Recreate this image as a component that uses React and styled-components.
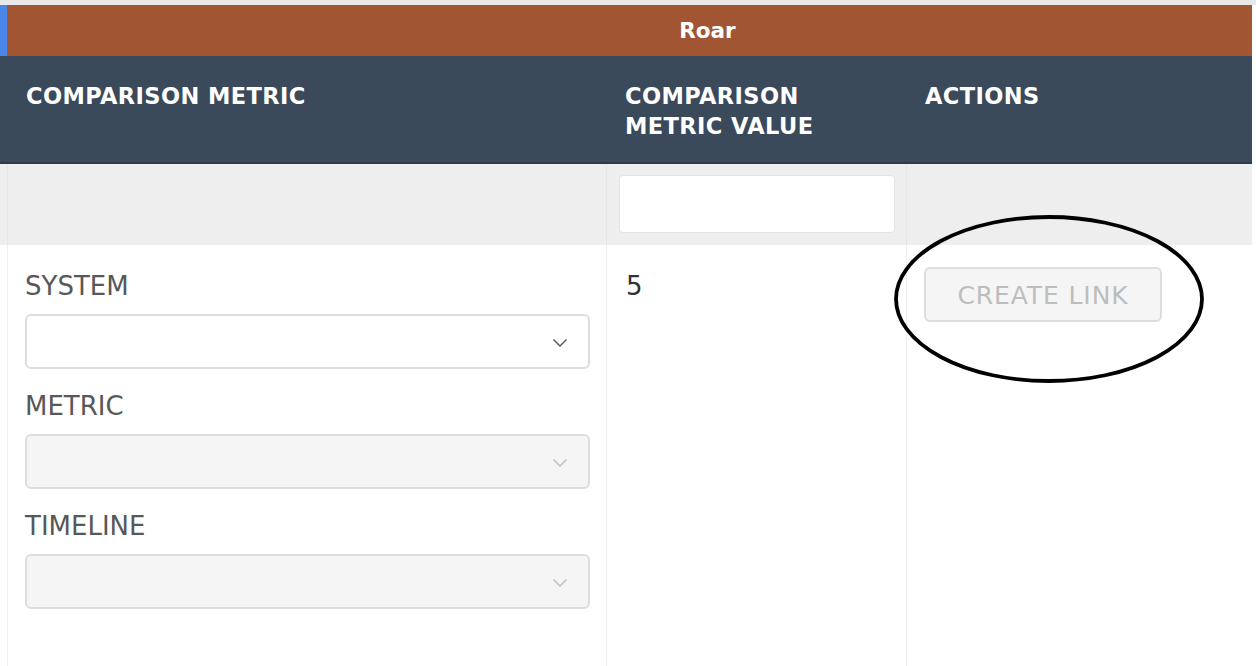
import styled, { createGlobalStyle } from "styled-components";

const GlobalStyle = createGlobalStyle`
  html, body {
    margin: 0;
    padding: 0;
    background: #ffffff;
  }
  body {
    font-family: "DejaVu Sans", "Noto Sans", Arial, sans-serif;
    overflow: hidden;
  }
`;

const colors = {
  accent: "#4a86e8",
  group: "#a15532",
  header: "#3a4a5b",
  headerEdge: "#2e3b49",
  filter: "#eeeeee",
  line: "#f0f0f0",
  label: "#585858",
};

const Chevron = ({ disabled }) => (
  <svg width="16" height="10" viewBox="0 0 16 10" fill="none">
    <path
      d="M1.5 1.5 L8 8 L14.5 1.5"
      stroke={disabled ? "#bdbdbd" : "#555"}
      strokeWidth="1.4"
    />
  </svg>
);

const Select = ({ disabled }) => (
  <SelectBox disabled={disabled}>
    <Chevron disabled={disabled} />
  </SelectBox>
);

const App = () => {
  return (
    <Page>
      <GlobalStyle />
      <Table>
        <GroupCell $accent />
        <GroupCell>Roar</GroupCell>

        <HeadCell />
        <HeadCell>COMPARISON METRIC</HeadCell>
        <HeadCell>
          COMPARISON
          <br />
          METRIC VALUE
        </HeadCell>
        <HeadCell>ACTIONS</HeadCell>

        <FilterCell />
        <FilterCell $divided />
        <FilterCell $divided>
          <FilterInput />
        </FilterCell>
        <FilterCell $divided />

        <BodyCell />
        <BodyCell $divided>
          <Field>
            <Label>SYSTEM</Label>
            <Select />
          </Field>
          <Field>
            <Label>METRIC</Label>
            <Select disabled />
          </Field>
          <Field>
            <Label>TIMELINE</Label>
            <Select disabled />
          </Field>
        </BodyCell>
        <BodyCell $divided>
          <Value>5</Value>
        </BodyCell>
        <BodyCell $divided $top="22px">
          <LinkButton disabled>CREATE LINK</LinkButton>
        </BodyCell>
      </Table>

      <Annotation width="314" height="172" viewBox="0 0 314 172">
        <ellipse cx="157" cy="86" rx="153" ry="82" stroke="#000" strokeWidth="3.8" fill="none" />
      </Annotation>
    </Page>
  );
};

export default App;

const Page = styled.div`
  position: relative;
  width: 1256px;
  height: 666px;
  border-top: 5px solid #e8e8e8;
  box-sizing: border-box;
`;

const Table = styled.div`
  display: grid;
  grid-template-columns: 7px 599px 300px 346px;
  grid-template-rows: 51px 108px 81px 1fr;
  width: 1252px;
  height: 661px;
  border-right: 1px solid #e6e6e6;
  box-sizing: border-box;
`;

const GroupCell = styled.div`
  grid-column: ${(p) => (p.$accent ? "1" : "2 / span 3")};
  background: ${(p) => (p.$accent ? colors.accent : colors.group)};
  color: #ffffff;
  font-weight: 700;
  font-size: 21.5px;
  display: flex;
  align-items: center;
  justify-content: center;
  padding-left: ${(p) => (p.$accent ? "0" : "156px")};
  padding-bottom: 1px;
  box-sizing: border-box;
`;

const HeadCell = styled.div`
  background: ${colors.header};
  border-bottom: 2px solid ${colors.headerEdge};
  color: #ffffff;
  font-weight: 700;
  font-size: 22.5px;
  letter-spacing: 0.4px;
  line-height: 30px;
  padding: 25px 19px 0;
  box-sizing: border-box;
`;

const FilterCell = styled.div`
  background: ${colors.filter};
  border-left: ${(p) => (p.$divided ? `1px solid #e6e6e6` : "none")};
  padding: 11px 11px 12px 12px;
  box-sizing: border-box;
`;

const FilterInput = styled.div`
  height: 58px;
  background: #ffffff;
  border: 1px solid #e4e4e4;
  border-radius: 4px;
  box-sizing: border-box;
`;

const BodyCell = styled.div`
  background: #ffffff;
  border-left: ${(p) => (p.$divided ? `1px solid ${colors.line}` : "none")};
  padding: ${(p) => p.$top || "24px"} 16px 0 17px;
  box-sizing: border-box;
`;

const Field = styled.div`
  display: flex;
  flex-direction: column;
  gap: 11px;
  margin-bottom: 20px;
`;

const Label = styled.div`
  color: ${colors.label};
  font-size: 26px;
  font-weight: 400;
  line-height: 34px;
`;

const SelectBox = styled.div`
  height: 55px;
  border: 2px solid #dddddd;
  border-radius: 6px;
  background: ${(p) => (p.disabled ? "#f5f5f5" : "#ffffff")};
  display: flex;
  align-items: center;
  justify-content: flex-end;
  padding: 2px 20px 0 0;
  box-sizing: border-box;
`;

const Value = styled.div`
  color: #333333;
  font-size: 26px;
  line-height: 34px;
  padding-left: 2px;
`;

const LinkButton = styled.button`
  width: 238px;
  height: 55px;
  padding: 2px 0 0;
  background: #f5f5f5;
  border: 2px solid #dddddd;
  border-radius: 6px;
  color: #bdbdbd;
  font-family: "DejaVu Sans", "Noto Sans", Arial, sans-serif;
  font-size: 25px;
  letter-spacing: 0.9px;
  font-weight: 400;
  box-sizing: border-box;
`;

const Annotation = styled.svg`
  position: absolute;
  left: 892px;
  top: 208px;
  pointer-events: none;
`;
